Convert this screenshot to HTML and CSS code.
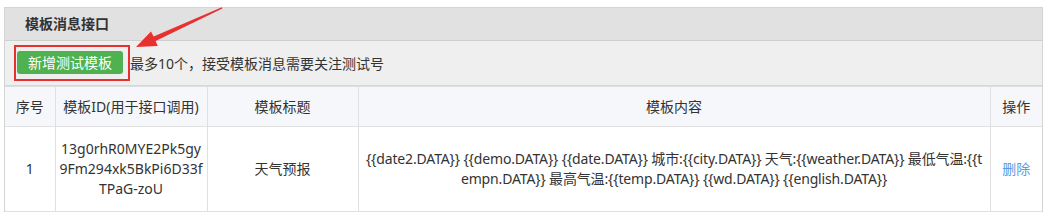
FILE: index.html
```html
<!DOCTYPE html>
<html lang="zh-CN">

<head>
    <meta charset="UTF-8">
    <title>模板消息接口</title>
    <link rel="stylesheet" href="styles.css">
</head>

<body>
    <div class="panel">
        <div class="panel-heading">模板消息接口</div>
        <div class="panel-toolbar">
            <span class="mark-box">
                <a href="#" class="btn-green">新增测试模板</a>
            </span>
            <span class="tip">最多10个，接受模板消息需要关注测试号</span>
        </div>
        <table class="tpl-table">
            <colgroup>
                <col class="c-no">
                <col class="c-id">
                <col class="c-title">
                <col class="c-content">
                <col class="c-op">
            </colgroup>
            <thead>
                <tr>
                    <th>序号</th>
                    <th>模板ID(用于接口调用)</th>
                    <th>模板标题</th>
                    <th>模板内容</th>
                    <th>操作</th>
                </tr>
            </thead>
            <tbody>
                <tr>
                    <td>1</td>
                    <td class="break">13g0rhR0MYE2Pk5gy9Fm294xk5BkPi6D33fTPaG-zoU</td>
                    <td>天气预报</td>
                    <td class="break content">{{date2.DATA}} {{demo.DATA}} {{date.DATA}} 城市:{{city.DATA}} 天气:{{weather.DATA}} 最低气温:{{tempn.DATA}} 最高气温:{{temp.DATA}} {{wd.DATA}} {{english.DATA}}</td>
                    <td><a href="#" class="link">删除</a></td>
                </tr>
            </tbody>
        </table>
    </div>

    <!-- red annotation arrow -->
    <svg class="arrow" width="1053" height="223" viewBox="0 0 1053 223">
        <polygon points="136,47 151,31.4 153.6,36.4 221.8,7.2 222.4,8.6 155.6,41 157.8,46" fill="#e8302f" />
    </svg>
</body>

</html>
```

FILE: styles.css
```css
/* Page base */
body {
    margin: 0;
    padding: 7px 10px 0 4px;
    font-family: "Noto Sans", "Noto Sans CJK SC", sans-serif;
    font-size: 14px;
    color: #333;
    background: #fff;
    position: relative;
}

/* Panel */
.panel {
    width: 1037px;
    border: 1px solid #d4d4d4;
    border-bottom: none;
}

.panel-heading {
    height: 32px;
    line-height: 32px;
    padding-left: 20px;
    background: #e1e1e1;
    border-bottom: 1px solid #cfcfcf;
    font-weight: bold;
}

.panel-toolbar {
    display: flex;
    align-items: center;
    height: 44px;
    padding-left: 9px;
    background: #efefef;
    border-bottom: 1px solid #d6d6d6;
}

/* Red box drawn around the button */
.mark-box {
    display: inline-flex;
    padding: 4px 5px 5px 1px;
    border: 2px solid #e8302f;
}

.btn-green {
    display: inline-block;
    height: 23px;
    line-height: 23px;
    padding: 0 11px;
    background: #4fb14f;
    color: #fff;
    border-radius: 3px;
    text-decoration: none;
}

/* Table */
.tpl-table {
    width: 100%;
    border-collapse: collapse;
    table-layout: fixed;
}

.c-no { width: 50px; }
.c-id { width: 152px; }
.c-title { width: 151px; }
.c-op { width: 52px; }

.tpl-table th,
.tpl-table td {
    border: 1px solid #e0e0e0;
    text-align: center;
    padding: 0 3px;
    line-height: 20px;
}

.tpl-table th {
    height: 39px;
    font-weight: normal;
    background: #f5f7fa;
}

.tpl-table td {
    height: 84px;
}

.tpl-table tr > :first-child {
    border-left: none;
}

.tpl-table tr > :last-child {
    border-right: none;
}

.break {
    word-break: break-all;
}

.tpl-table td.content {
    padding: 0 5px;
    letter-spacing: -0.15px;
}

.link {
    color: #5b9be0;
    text-decoration: none;
}

/* Annotation arrow overlay */
.arrow {
    position: absolute;
    top: 0;
    left: 0;
    pointer-events: none;
}
```
